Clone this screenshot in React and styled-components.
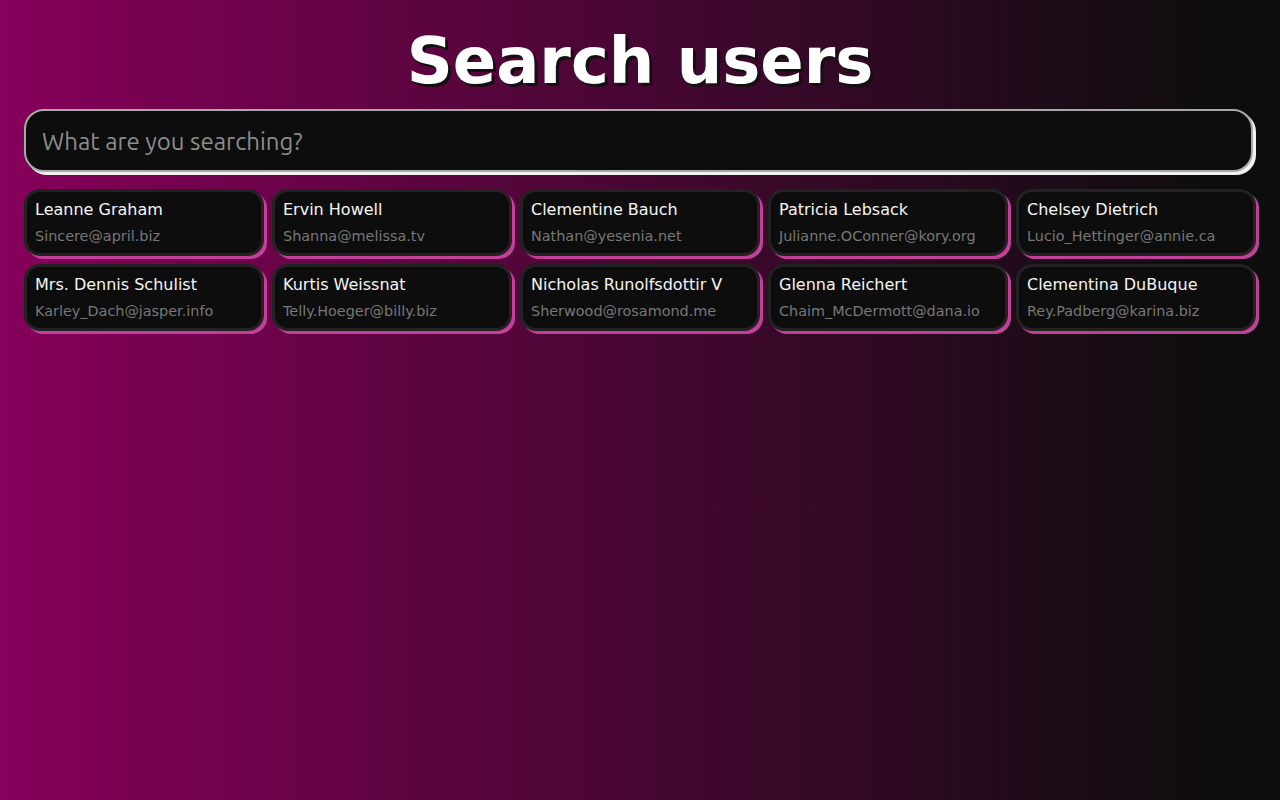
import React, { useState } from 'react';
import styled, { createGlobalStyle } from 'styled-components';

const GlobalStyle = createGlobalStyle`
  * {
    box-sizing: border-box;
  }
  html, body {
    margin: 0;
    min-height: 100%;
  }
  body {
    min-height: 100vh;
    background: linear-gradient(90deg, #87005b 0%, #0d0d0d 95%);
    font-family: "DejaVu Sans", sans-serif;
  }
`;

const users = [
  { name: 'Leanne Graham', email: 'Sincere@april.biz' },
  { name: 'Ervin Howell', email: 'Shanna@melissa.tv' },
  { name: 'Clementine Bauch', email: 'Nathan@yesenia.net' },
  { name: 'Patricia Lebsack', email: 'Julianne.OConner@kory.org' },
  { name: 'Chelsey Dietrich', email: 'Lucio_Hettinger@annie.ca' },
  { name: 'Mrs. Dennis Schulist', email: 'Karley_Dach@jasper.info' },
  { name: 'Kurtis Weissnat', email: 'Telly.Hoeger@billy.biz' },
  { name: 'Nicholas Runolfsdottir V', email: 'Sherwood@rosamond.me' },
  { name: 'Glenna Reichert', email: 'Chaim_McDermott@dana.io' },
  { name: 'Clementina DuBuque', email: 'Rey.Padberg@karina.biz' },
];

const Page = styled.main`
  padding: 24px 24px 24px;
  display: flex;
  flex-direction: column;
`;

const Title = styled.h1`
  margin: 0 0 10px;
  text-align: center;
  color: #ffffff;
  font-family: "DejaVu Sans", sans-serif;
  font-weight: 700;
  font-size: 64px;
  line-height: 75px;
  text-shadow: 3px 3px 0 #111;
`;

const SearchInput = styled.input`
  width: calc(100% - 3px);
  height: 63px;
  margin-bottom: 17px;
  padding: 1px 16px 0;
  border: 2px solid #a9a9a9;
  border-radius: 20px;
  background: #0d0d0d;
  box-shadow: 3px 3px 0 #f2f2f2;
  color: #eee;
  font-family: "Ubuntu", "Open Sans", sans-serif;
  font-size: 24px;
  outline: none;

  &::placeholder {
    color: #8c8c8c;
  }
`;

const Grid = styled.ul`
  list-style: none;
  margin: 0;
  padding: 0;
  display: grid;
  grid-template-columns: repeat(5, 240px);
  gap: 8px;
`;

const Card = styled.li`
  height: 67px;
  padding: 8px 8px 0;
  border: 3px solid #222;
  border-radius: 16px;
  background: #0d0d0d;
  box-shadow: 3px 3px 0 #c2409a;
  display: flex;
  flex-direction: column;
  gap: 6px;
`;

const Name = styled.span`
  color: #f5f5f5;
  font-size: 16px;
  line-height: 20px;
`;

const Email = styled.span`
  color: #777;
  font-size: 14.4px;
  line-height: 20px;
`;

export default function App() {
  const [query, setQuery] = useState('');
  const shown = users.filter((u) =>
    u.name.toLowerCase().includes(query.toLowerCase())
  );

  return (
    <>
      <GlobalStyle />
      <Page>
        <Title>Search users</Title>
        <SearchInput
          placeholder="What are you searching?"
          value={query}
          onChange={(e) => setQuery(e.target.value)}
        />
        <Grid>
          {shown.map((u) => (
            <Card key={u.email}>
              <Name>{u.name}</Name>
              <Email>{u.email}</Email>
            </Card>
          ))}
        </Grid>
      </Page>
    </>
  );
}
